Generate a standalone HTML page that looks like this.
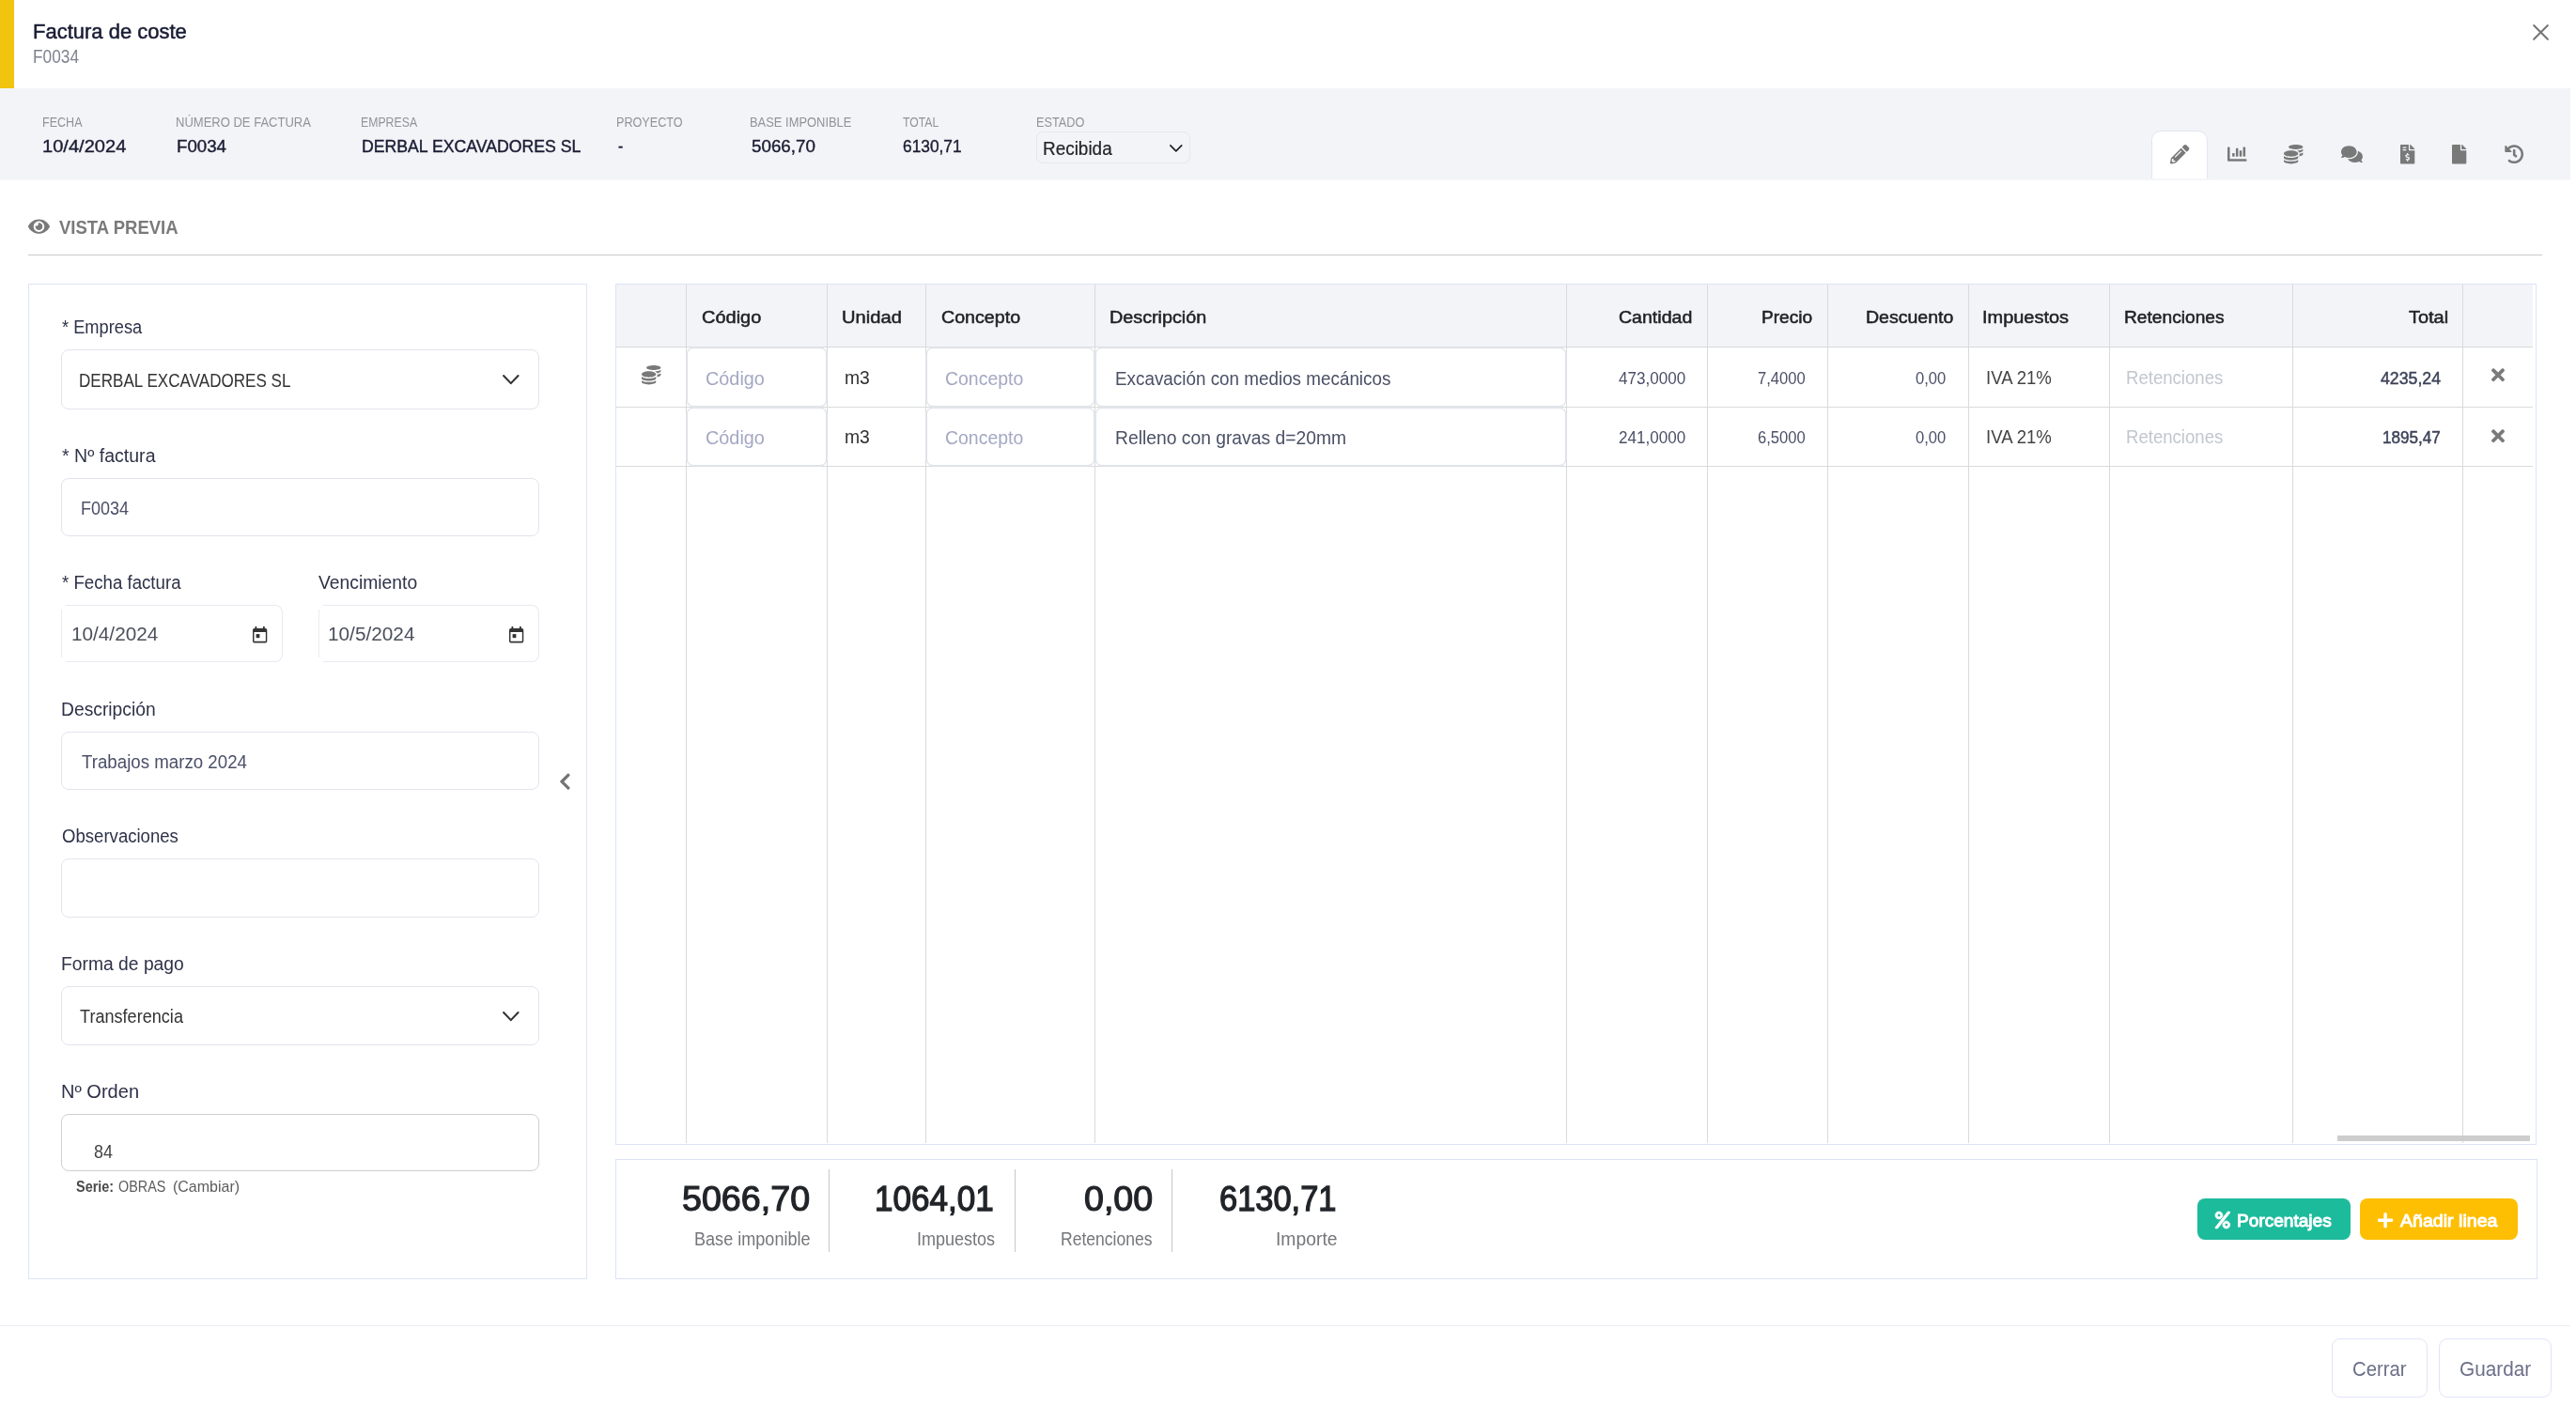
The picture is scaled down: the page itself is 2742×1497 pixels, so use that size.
<!DOCTYPE html>
<html lang="es"><head><meta charset="utf-8"><title>Factura de coste F0034</title>
<style>
html,body{margin:0;padding:0;background:#fff;}
body{width:2742px;height:1497px;position:relative;overflow:hidden;font-family:"Liberation Sans", sans-serif;}
.bx,.ic,.tx{position:absolute;box-sizing:border-box;}
.tx{white-space:nowrap;line-height:1;margin:0;padding:0;font-kerning:normal;transform-origin:0 0;}
.ic{display:block;overflow:visible;}
section,header,footer,main,aside,nav{display:block;position:absolute;left:0;top:0;width:0;height:0;}
#app{position:absolute;left:0;top:0;width:2742px;height:1497px;will-change:transform;}
</style></head><body><div id="app">
<header>
<div class="bx" style="left:0px;top:0px;width:15px;height:94.3px;background:#f1c40f;"></div>
<div class="tx" style="left:35.05px;top:23.00px;font-size:21.9px;font-weight:400;color:#181c33;transform:scaleX(1.0045);-webkit-text-stroke:0.498px #181c33;">Factura de coste</div>
<div class="tx" style="left:34.93px;top:51.00px;font-size:19.9px;font-weight:400;color:#80838f;transform:scaleX(0.8692);">F0034</div>
<svg class="ic" width="17" height="16.8" viewBox="0 0 17 16.8" style="left:2695.9px;top:25.9px;stroke:#767676;stroke-width:2.05;stroke-linecap:round;fill:none;"><path d="M1.1 1.1 L15.9 15.7 M15.9 1.1 L1.1 15.7"/></svg>
</header>
<section id="band">
<div class="bx" style="left:0px;top:94.3px;width:2736px;height:95.3px;background:#f3f4f8;"></div>
<div class="bx" style="left:0px;top:189.6px;width:2736px;height:2.4px;background:#f5f6f9;"></div>
<div class="bx" style="left:1103.4px;top:140.2px;width:164.1px;height:33.6px;border:1px solid #e3e7ee;border-radius:7px;"></div>
<svg class="ic" width="13.6" height="7.7" viewBox="0 0 13.6 7.7" style="left:1244.7px;top:153.9px;fill:none;stroke:#222;stroke-width:1.7;stroke-linecap:round;stroke-linejoin:round"><path d="M0.85 0.85 L6.8 6.85 L12.75 0.85"/></svg>
<div class="tx" style="left:44.69px;top:122.00px;font-size:15.5px;font-weight:400;color:#90939a;transform:scaleX(0.8104);">FECHA</div>
<div class="tx" style="left:187.16px;top:122.00px;font-size:15.5px;font-weight:400;color:#90939a;transform:scaleX(0.8396);">NÚMERO DE FACTURA</div>
<div class="tx" style="left:384.41px;top:122.00px;font-size:15.5px;font-weight:400;color:#90939a;transform:scaleX(0.7925);">EMPRESA</div>
<div class="tx" style="left:655.59px;top:122.00px;font-size:15.5px;font-weight:400;color:#90939a;transform:scaleX(0.8150);">PROYECTO</div>
<div class="tx" style="left:798.47px;top:122.00px;font-size:15.5px;font-weight:400;color:#90939a;transform:scaleX(0.8335);">BASE IMPONIBLE</div>
<div class="tx" style="left:960.50px;top:122.00px;font-size:15.5px;font-weight:400;color:#90939a;transform:scaleX(0.7873);">TOTAL</div>
<div class="tx" style="left:1102.58px;top:122.00px;font-size:15.5px;font-weight:400;color:#90939a;transform:scaleX(0.8192);">ESTADO</div>
<div class="tx" style="left:44.59px;top:147.00px;font-size:18.1px;font-weight:400;color:#1a1d33;transform:scaleX(1.1104);-webkit-text-stroke:0.360px #1a1d33;">10/4/2024</div>
<div class="tx" style="left:187.57px;top:147.00px;font-size:18.1px;font-weight:400;color:#1a1d33;transform:scaleX(1.0310);-webkit-text-stroke:0.388px #1a1d33;">F0034</div>
<div class="tx" style="left:384.52px;top:147.00px;font-size:18.1px;font-weight:400;color:#1a1d33;transform:scaleX(0.9762);-webkit-text-stroke:0.410px #1a1d33;">DERBAL EXCAVADORES SL</div>
<div class="tx" style="left:800.00px;top:147.00px;font-size:18.1px;font-weight:400;color:#1a1d33;transform:scaleX(1.0376);-webkit-text-stroke:0.385px #1a1d33;">5066,70</div>
<div class="tx" style="left:961.20px;top:147.00px;font-size:18.1px;font-weight:400;color:#1a1d33;transform:scaleX(0.9565);-webkit-text-stroke:0.418px #1a1d33;">6130,71</div>
<div class="tx" style="left:657.60px;top:147.00px;font-size:18.1px;font-weight:400;color:#1a1d33;transform:scaleX(0.8667);-webkit-text-stroke:0.462px #1a1d33;">-</div>
<div class="tx" style="left:1109.92px;top:149.00px;font-size:19.4px;font-weight:400;color:#212529;transform:scaleX(0.9763);-webkit-text-stroke:0.205px #212529;">Recibida</div>
<nav>
<div class="bx" style="left:2290.2px;top:139px;width:59.8px;height:50.6px;background:#fff;border:1px solid #e3e5f1;border-bottom:none;border-radius:10px 10px 0 0;"></div>
<svg class="ic" viewBox="0 0 512 512" width="20.40" height="20.4" style="left:2310.10px;top:154.20px;fill:#797979;"><path transform="translate(0,448) scale(1,-1)" d="M497.9 305.9l-46.1006 -46.1006c-4.7002 -4.7002 -12.2998 -4.7002 -17 0l-111 111c-4.7002 4.7002 -4.7002 12.2998 0 17l46.1006 46.1006c18.6992 18.6992 49.0996 18.6992 67.8994 0l60.1006 -60.1006c18.7998 -18.7002 18.7998 -49.0996 0 -67.8994zM284.2 348.2 c4.7002 4.7002 12.2998 4.7002 17.0996 0l111 -111c4.7002 -4.7002 4.7002 -12.2998 0 -17l-262.6 -262.601l-121.5 -21.2998c-16.4004 -2.7998 -30.7002 11.4004 -27.7998 27.7998l21.1992 121.5zM124.1 108.1c5.5 -5.5 14.3008 -5.5 19.8008 0l154 154 c5.5 5.5 5.5 14.3008 0 19.8008s-14.3008 5.5 -19.8008 0l-154 -154c-5.5 -5.5 -5.5 -14.3008 0 -19.8008zM88 24v48h-36.2998l-11.2998 -64.5l31.0996 -31.0996l64.5 11.2998v36.2998h-48z"/></svg>
<svg class="ic" viewBox="0 0 512 512" width="20.40" height="20.4" style="left:2370.80px;top:154.40px;fill:#797979;"><path transform="translate(0,448) scale(1,-1)" d="M332.8 128c-6.39941 0 -12.7998 6.40039 -12.7998 12.7998v134.4c0 6.39941 6.40039 12.7998 12.7998 12.7998h38.4004c6.39941 0 12.7998 -6.40039 12.7998 -12.7998v-134.4c0 -6.39941 -6.40039 -12.7998 -12.7998 -12.7998h-38.4004zM428.8 128 c-6.39941 0 -12.7998 6.40039 -12.7998 12.7998v230.4c0 6.39941 6.40039 12.7998 12.7998 12.7998h38.4004c6.39941 0 12.7998 -6.40039 12.7998 -12.7998v-230.4c0 -6.39941 -6.40039 -12.7998 -12.7998 -12.7998h-38.4004zM140.8 128 c-6.39941 0 -12.7998 6.40039 -12.7998 12.7998v70.4004c0 6.39941 6.40039 12.7998 12.7998 12.7998h38.4004c6.39941 0 12.7998 -6.40039 12.7998 -12.7998v-70.4004c0 -6.39941 -6.40039 -12.7998 -12.7998 -12.7998h-38.4004zM236.8 128 c-6.39941 0 -12.7998 6.40039 -12.7998 12.7998v198.4c0 6.39941 6.40039 12.7998 12.7998 12.7998h38.4004c6.39941 0 12.7998 -6.40039 12.7998 -12.7998v-198.4c0 -6.39941 -6.40039 -12.7998 -12.7998 -12.7998h-38.4004zM496 64c8.83984 0 16 -7.16016 16 -16v-32 c0 -8.83984 -7.16016 -16 -16 -16h-464c-17.6699 0 -32 14.3301 -32 32v336c0 8.83984 7.16016 16 16 16h32c8.83984 0 16 -7.16016 16 -16v-304h432z"/></svg>
<svg class="ic" viewBox="0 0 512 512" width="20.40" height="20.4" style="left:2431.00px;top:154.30px;fill:#797979;"><path transform="translate(0,448) scale(1,-1)" d="M0 42.7002c41.2998 -29.1006 116.8 -42.7002 192 -42.7002s150.7 13.5996 192 42.7002v-42.7002c0 -35.2998 -86 -64 -192 -64s-192 28.7002 -192 64v42.7002zM320 320c-106 0 -192 28.7002 -192 64s86 64 192 64s192 -28.7002 192 -64s-86 -64 -192 -64zM0 147.6 c41.2998 -34 116.9 -51.5996 192 -51.5996s150.7 17.5996 192 51.5996v-51.5996c0 -35.2998 -86 -64 -192 -64s-192 28.7002 -192 64v51.5996zM416 136.6v63.6006c38.7002 6.89941 72.7998 18.0996 96 34.5v-42.7002c0 -23.7002 -38.7002 -44.2998 -96 -55.4004zM192 288 c106 0 192 -35.7998 192 -80s-86 -80 -192 -80s-192 35.7998 -192 80s86 80 192 80zM411.3 231.7c-8.7998 23.7002 -30.5 42.8994 -60 57.2002c64.2002 3.19922 125.2 16.6992 160.7 41.7998v-42.7002c0 -24.2998 -40.7002 -45.5 -100.7 -56.2998z"/></svg>
<svg class="ic" viewBox="0 0 576 512" width="22.95" height="20.4" style="left:2491.70px;top:154.40px;fill:#797979;"><path transform="translate(0,448) scale(1,-1)" d="M416 256c0 -88.4004 -93.0996 -160 -208 -160c-41 0 -79.0996 9.2998 -111.3 25c-21.7998 -12.7002 -52.1006 -25 -88.7002 -25c-3.2002 0 -6 1.7998 -7.2998 4.7998s-0.700195 6.40039 1.5 8.7002c0.299805 0.299805 22.3994 24.2998 35.7998 54.5 c-23.9004 26.0996 -38 57.7002 -38 92c0 88.4004 93.0996 160 208 160s208 -71.5996 208 -160zM538 36c13.4004 -30.2998 35.5 -54.2002 35.7998 -54.5c2.2002 -2.40039 2.7998 -5.7998 1.5 -8.7002c-1.2002 -2.89941 -4.09961 -4.7998 -7.2998 -4.7998 c-36.5996 0 -66.9004 12.2998 -88.7002 25c-32.2002 -15.7998 -70.2998 -25 -111.3 -25c-86.2002 0 -160.2 40.4004 -191.7 97.9004c10.4004 -1.10059 20.9004 -1.90039 31.7002 -1.90039c132.3 0 240 86.0996 240 192c0 6.7998 -0.400391 13.5 -1.2998 20.0996 c75.7998 -23.8994 129.3 -81.1992 129.3 -148.1c0 -34.2998 -14.0996 -66 -38 -92z"/></svg>
<svg class="ic" viewBox="0 0 384 512" width="15.30" height="20.4" style="left:2554.80px;top:154.20px;fill:#797979;"><path transform="translate(0,448) scale(1,-1)" d="M377 343c4.5 -4.5 7 -10.5996 7 -16.9004v-6.09961h-128v128h6.09961c6.40039 0 12.5 -2.5 17 -7zM224 312c0 -13.2002 10.7998 -24 24 -24h136v-328c0 -13.2998 -10.7002 -24 -24 -24h-336c-13.2998 0 -24 10.7002 -24 24v464c0 13.2998 10.7002 24 24 24h200v-136z M64 376v-16c0 -4.41992 3.58008 -8 8 -8h80c4.41992 0 8 3.58008 8 8v16c0 4.41992 -3.58008 8 -8 8h-80c-4.41992 0 -8 -3.58008 -8 -8zM64 296c0 -4.41992 3.58008 -8 8 -8h80c4.41992 0 8 3.58008 8 8v16c0 4.41992 -3.58008 8 -8 8h-80c-4.41992 0 -8 -3.58008 -8 -8 v-16zM208 32.1201c23.6201 0.629883 42.6699 20.54 42.6699 45.0703c0 19.9697 -12.9902 37.8096 -31.5801 43.3896l-45 13.5c-5.16016 1.54004 -8.76953 6.78027 -8.76953 12.7295c0 7.27051 5.2998 13.1904 11.7998 13.1904h28.1104 c4.55957 0 8.94922 -1.29004 12.8193 -3.71973c3.24023 -2.03027 7.36035 -1.91016 10.1299 0.729492l11.75 11.21c3.53027 3.37012 3.33008 9.20996 -0.569336 12.1406c-9.10059 6.83984 -20.0801 10.7695 -31.3701 11.3496v24.29c0 4.41992 -3.58008 8 -8 8h-16 c-4.41992 0 -8 -3.58008 -8 -8v-24.1201c-23.6201 -0.629883 -42.6699 -20.5498 -42.6699 -45.0703c0 -19.9697 12.9893 -37.8096 31.5801 -43.3896l45 -13.5c5.15918 -1.54004 8.76953 -6.78027 8.76953 -12.7295c0 -7.27051 -5.2998 -13.1904 -11.7998 -13.1904h-28.1104 c-4.55957 0 -8.9502 1.2998 -12.8193 3.71973c-3.24023 2.03027 -7.36035 1.91016 -10.1309 -0.729492l-11.75 -11.21c-3.5293 -3.37012 -3.3291 -9.20996 0.570312 -12.1406c9.10059 -6.83008 20.0801 -10.7695 31.3701 -11.3496v-24.29c0 -4.41992 3.58008 -8 8 -8h16 c4.41992 0 8 3.58008 8 8v24.1201z"/></svg>
<svg class="ic" viewBox="0 0 384 512" width="15.30" height="20.4" style="left:2610.40px;top:154.20px;fill:#797979;"><path transform="translate(0,448) scale(1,-1)" d="M224 312c0 -13.2002 10.7998 -24 24 -24h136v-328c0 -13.2998 -10.7002 -24 -24 -24h-336c-13.2998 0 -24 10.7002 -24 24v464c0 13.2998 10.7002 24 24 24h200v-136zM384 326.1v-6.09961h-128v128h6.09961c6.40039 0 12.5 -2.5 17 -7l97.9004 -98 c4.5 -4.5 7 -10.5996 7 -16.9004z"/></svg>
<svg class="ic" viewBox="0 0 512 512" width="20.40" height="20.4" style="left:2665.80px;top:154.30px;fill:#797979;"><path transform="translate(0,448) scale(1,-1)" d="M504 192.469c0.25293 -136.64 -111.18 -248.372 -247.82 -248.468c-59.0146 -0.0419922 -113.223 20.5303 -155.821 54.9111c-11.0771 8.93945 -11.9053 25.541 -1.83984 35.6064l11.2676 11.2676c8.6084 8.6084 22.3525 9.55078 31.8906 1.9834 c31.3848 -24.9043 71.1045 -39.7695 114.323 -39.7695c101.705 0 184 82.3105 184 184c0 101.705 -82.3105 184 -184 184c-48.8145 0 -93.1494 -18.9688 -126.068 -49.9316l50.7539 -50.7539c10.0801 -10.0801 2.94141 -27.3145 -11.3125 -27.3145h-145.373 c-8.83691 0 -16 7.16309 -16 16v145.373c0 14.2539 17.2344 21.3926 27.3145 11.3135l49.3711 -49.3711c44.5234 42.5488 104.866 68.6846 171.314 68.6846c136.81 0 247.747 -110.78 248 -247.531zM323.088 113.685c-8.1377 -10.4629 -23.2158 -12.3467 -33.6787 -4.20996 l-65.4092 50.874v135.651c0 13.2549 10.7451 24 24 24h16c13.2549 0 24 -10.7451 24 -24v-104.349l40.7012 -31.6572c10.4629 -8.13672 12.3477 -23.2158 4.20996 -33.6787z"/></svg>
</nav></section>
<section id="vista">
<svg class="ic" viewBox="0 0 576 512" width="22.95" height="20.4" style="left:29.80px;top:231.25px;fill:#797979;"><path transform="translate(0,448) scale(1,-1)" d="M572.52 206.6c2.21387 -4.37793 3.46094 -9.38965 3.46094 -14.626c0 -5.2373 -1.24707 -10.1855 -3.46094 -14.5635c-54.1992 -105.771 -161.59 -177.41 -284.52 -177.41s-230.29 71.5898 -284.52 177.4c-2.21387 4.37793 -3.46094 9.38965 -3.46094 14.626 c0 5.2373 1.24707 10.1855 3.46094 14.5635c54.1992 105.771 161.59 177.41 284.52 177.41s230.29 -71.5898 284.52 -177.4zM288 48c0.0234375 0 0.0458984 -0.000976562 0.0703125 -0.000976562c79.4365 0 143.93 64.4922 143.93 143.93v0.0712891 c0 79.4756 -64.5244 144 -144 144s-144 -64.5244 -144 -144s64.5244 -144 144 -144zM288 288c0.0761719 0 0.160156 -0.0273438 0.237305 -0.0273438c52.8623 0 95.7803 -42.917 95.7803 -95.7793s-42.918 -95.7803 -95.7803 -95.7803s-95.7803 42.918 -95.7803 95.7803 c0 8.68945 1.16016 17.1104 3.33301 25.1162c7.93164 -5.83594 17.7432 -9.26758 28.3359 -9.26758c26.4092 0 47.8496 21.4404 47.8496 47.8496c0 10.5938 -3.44922 20.3867 -9.28516 28.3184c8.0459 2.34277 16.541 3.66797 25.3096 3.79004z"/></svg>
<div class="tx" style="left:62.70px;top:233.00px;font-size:19.9px;font-weight:700;color:#7a7a7a;transform:scaleX(0.9317);">VISTA PREVIA</div>
<div class="bx" style="left:30px;top:271px;width:2676px;height:1px;background:#c9c9c9;"></div>
</section>
<aside>
<div class="bx" style="left:30px;top:302px;width:595px;height:1060px;border:1px solid #dee4f5;"></div>
<div class="bx" style="left:65px;top:372px;width:509px;height:64px;border:1px solid #e1e4ec;border-radius:8px;background:#fff;"></div>
<svg class="ic" width="17.6" height="10.2" viewBox="0 0 17.6 10.2" style="left:535.4px;top:398.6px;fill:none;stroke:#333;stroke-width:2.1;stroke-linecap:round;stroke-linejoin:round"><path d="M1.05 1.05 L8.8 9.15 L16.55 1.05"/></svg>
<div class="bx" style="left:65px;top:509.2px;width:509px;height:61.8px;border:1px solid #e1e4ec;border-radius:8px;background:#fff;"></div>
<div class="bx" style="left:69.5px;top:644px;width:231.5px;height:61px;border:1px solid #e6e9f1;border-left:none;border-radius:0 8px 8px 0;background:#fff;"></div>
<div class="bx" style="left:65px;top:648.7px;width:1px;height:51.3px;background:#e9ecf3;"></div>
<div class="bx" style="left:343.5px;top:644px;width:230.5px;height:61px;border:1px solid #e6e9f1;border-left:none;border-radius:0 8px 8px 0;background:#fff;"></div>
<div class="bx" style="left:339px;top:648.7px;width:1px;height:51.3px;background:#e9ecf3;"></div>
<svg class="ic" width="15.3" height="17.6" viewBox="0 0 15.3 17.6" style="left:268.6px;top:667.1px;"><path fill="#333" fill-rule="evenodd" d="M2.5 0h1.8v2.1h6.7V0h1.8v2.1h0.7a1.8 1.8 0 0 1 1.8 1.8v11.9a1.8 1.8 0 0 1-1.8 1.8H1.8A1.8 1.8 0 0 1 0 15.8V3.900a1.8 1.8 0 0 1 1.8-1.8h0.7zM1.45 6v9.7h12.4V6z"/><rect x="3.6" y="8.1" width="3.8" height="4.1" fill="#333"/></svg>
<svg class="ic" width="15.3" height="17.6" viewBox="0 0 15.3 17.6" style="left:541.7px;top:667.1px;"><path fill="#333" fill-rule="evenodd" d="M2.5 0h1.8v2.1h6.7V0h1.8v2.1h0.7a1.8 1.8 0 0 1 1.8 1.8v11.9a1.8 1.8 0 0 1-1.8 1.8H1.8A1.8 1.8 0 0 1 0 15.8V3.900a1.8 1.8 0 0 1 1.8-1.8h0.7zM1.45 6v9.7h12.4V6z"/><rect x="3.6" y="8.1" width="3.8" height="4.1" fill="#333"/></svg>
<div class="bx" style="left:65px;top:779.2px;width:509px;height:61.8px;border:1px solid #e1e4ec;border-radius:8px;background:#fff;"></div>
<div class="bx" style="left:65px;top:914px;width:509px;height:63px;border:1px solid #e1e4ec;border-radius:8px;background:#fff;"></div>
<div class="bx" style="left:65px;top:1050.2px;width:509px;height:62.8px;border:1px solid #e1e4ec;border-radius:8px;background:#fff;"></div>
<svg class="ic" width="17.6" height="10.2" viewBox="0 0 17.6 10.2" style="left:535.4px;top:1076.6px;fill:none;stroke:#333;stroke-width:2.1;stroke-linecap:round;stroke-linejoin:round"><path d="M1.05 1.05 L8.8 9.15 L16.55 1.05"/></svg>
<div class="bx" style="left:65px;top:1186px;width:509px;height:61px;border:1px solid #cfcfcf;border-radius:8px;background:#fff;"></div>
<svg class="ic" viewBox="0 0 320 512" width="12.75" height="20.4" style="left:594.87px;top:822.30px;fill:#737373;"><path transform="translate(0,448) scale(1,-1)" d="M34.5195 208.97l194.351 194.34c9.37012 9.37012 24.5703 9.37012 33.9395 0l22.6709 -22.6699c9.35938 -9.35938 9.36914 -24.5195 0.0390625 -33.8994l-154.029 -154.74l154.02 -154.75c9.33984 -9.37988 9.32031 -24.54 -0.0400391 -33.9004l-22.6699 -22.6699 c-9.37012 -9.37012 -24.5693 -9.37012 -33.9395 0l-194.341 194.351c-9.36914 9.37012 -9.36914 24.5693 0 33.9395z"/></svg>
<div class="tx" style="left:65.90px;top:339.00px;font-size:19.6px;font-weight:400;color:#2e3248;transform:scaleX(0.9315);">* Empresa</div>
<div class="tx" style="left:65.90px;top:476.00px;font-size:19.6px;font-weight:400;color:#2e3248;transform:scaleX(0.9978);">* Nº factura</div>
<div class="tx" style="left:65.90px;top:611.00px;font-size:19.6px;font-weight:400;color:#2e3248;transform:scaleX(0.9521);">* Fecha factura</div>
<div class="tx" style="left:339.40px;top:611.00px;font-size:19.6px;font-weight:400;color:#2e3248;transform:scaleX(0.9855);">Vencimiento</div>
<div class="tx" style="left:64.92px;top:746.00px;font-size:19.6px;font-weight:400;color:#2e3248;transform:scaleX(0.9834);">Descripción</div>
<div class="tx" style="left:65.90px;top:881.00px;font-size:19.6px;font-weight:400;color:#2e3248;transform:scaleX(0.9481);">Observaciones</div>
<div class="tx" style="left:64.92px;top:1017.00px;font-size:19.6px;font-weight:400;color:#2e3248;transform:scaleX(0.9842);">Forma de pago</div>
<div class="tx" style="left:64.88px;top:1153.00px;font-size:19.6px;font-weight:400;color:#2e3248;transform:scaleX(1.0226);">Nº Orden</div>
<div class="tx" style="left:84.34px;top:396.00px;font-size:19.9px;font-weight:400;color:#333;transform:scaleX(0.8583);">DERBAL EXCAVADORES SL</div>
<div class="tx" style="left:85.59px;top:532.00px;font-size:19.9px;font-weight:400;color:#4b5068;transform:scaleX(0.9054);">F0034</div>
<div class="tx" style="left:75.66px;top:665.00px;font-size:20px;font-weight:400;color:#4b505c;transform:scaleX(1.0370);">10/4/2024</div>
<div class="tx" style="left:348.76px;top:665.00px;font-size:20px;font-weight:400;color:#4b505c;transform:scaleX(1.0393);">10/5/2024</div>
<div class="tx" style="left:86.50px;top:802.00px;font-size:19.9px;font-weight:400;color:#4b5068;transform:scaleX(0.9399);">Trabajos marzo 2024</div>
<div class="tx" style="left:85.00px;top:1073.00px;font-size:19.9px;font-weight:400;color:#333;transform:scaleX(0.9096);">Transferencia</div>
<div class="tx" style="left:99.90px;top:1217.00px;font-size:19.4px;font-weight:400;color:#444;transform:scaleX(0.9227);">84</div>
<div class="tx" style="left:80.90px;top:1255.00px;font-size:17px;font-weight:700;color:#4a4a4a;transform:scaleX(0.8500);">Serie:</div>
<div class="tx" style="left:126.20px;top:1255.00px;font-size:17px;font-weight:400;color:#5c5c5c;transform:scaleX(0.8449);">OBRAS</div>
<div class="tx" style="left:184.06px;top:1255.00px;font-size:17px;font-weight:400;color:#5c5c5c;transform:scaleX(0.9404);">(Cambiar)</div>
</aside>
<main>
<div class="bx" style="left:655px;top:302px;width:2045px;height:917px;border:1px solid #dbe3f4;"></div>
<div class="bx" style="left:656px;top:303px;width:2040px;height:66px;background:#f3f4f8;"></div>
<div class="bx" style="left:656px;top:369px;width:2040px;height:1px;background:#d9dadb;"></div>
<div class="bx" style="left:656px;top:433px;width:2040px;height:1px;background:#d9dadb;"></div>
<div class="bx" style="left:656px;top:496px;width:2040px;height:1px;background:#d9dadb;"></div>
<div class="bx" style="left:730px;top:303px;width:1px;height:914px;background:#d9dadb;"></div>
<div class="bx" style="left:880px;top:303px;width:1px;height:914px;background:#d9dadb;"></div>
<div class="bx" style="left:985px;top:303px;width:1px;height:914px;background:#d9dadb;"></div>
<div class="bx" style="left:1165px;top:303px;width:1px;height:914px;background:#d9dadb;"></div>
<div class="bx" style="left:1667px;top:303px;width:1px;height:914px;background:#d9dadb;"></div>
<div class="bx" style="left:1817px;top:303px;width:1px;height:914px;background:#d9dadb;"></div>
<div class="bx" style="left:1945px;top:303px;width:1px;height:914px;background:#d9dadb;"></div>
<div class="bx" style="left:2095px;top:303px;width:1px;height:914px;background:#d9dadb;"></div>
<div class="bx" style="left:2245px;top:303px;width:1px;height:914px;background:#d9dadb;"></div>
<div class="bx" style="left:2440px;top:303px;width:1px;height:914px;background:#d9dadb;"></div>
<div class="bx" style="left:2621px;top:303px;width:1px;height:914px;background:#d9dadb;"></div>
<div class="bx" style="left:731.3px;top:370.2px;width:148.4px;height:63px;border:1px solid #dde1e8;border-radius:7px;background:#fff;box-shadow:0 0 0 0.6px #e9ecf0;"></div>
<div class="bx" style="left:986.2px;top:370.2px;width:178.5px;height:63px;border:1px solid #dde1e8;border-radius:7px;background:#fff;box-shadow:0 0 0 0.6px #e9ecf0;"></div>
<div class="bx" style="left:1166.3px;top:370.2px;width:500.4px;height:63px;border:1px solid #dde1e8;border-radius:7px;background:#fff;box-shadow:0 0 0 0.6px #e9ecf0;"></div>
<div class="bx" style="left:731.3px;top:434px;width:148.4px;height:62.2px;border:1px solid #dde1e8;border-radius:7px;background:#fff;box-shadow:0 0 0 0.6px #e9ecf0;"></div>
<div class="bx" style="left:986.2px;top:434px;width:178.5px;height:62.2px;border:1px solid #dde1e8;border-radius:7px;background:#fff;box-shadow:0 0 0 0.6px #e9ecf0;"></div>
<div class="bx" style="left:1166.3px;top:434px;width:500.4px;height:62.2px;border:1px solid #dde1e8;border-radius:7px;background:#fff;box-shadow:0 0 0 0.6px #e9ecf0;"></div>
<svg class="ic" viewBox="0 0 512 512" width="20.40" height="20.4" style="left:682.80px;top:389.30px;fill:#797979;"><path transform="translate(0,448) scale(1,-1)" d="M0 42.7002c41.2998 -29.1006 116.8 -42.7002 192 -42.7002s150.7 13.5996 192 42.7002v-42.7002c0 -35.2998 -86 -64 -192 -64s-192 28.7002 -192 64v42.7002zM320 320c-106 0 -192 28.7002 -192 64s86 64 192 64s192 -28.7002 192 -64s-86 -64 -192 -64zM0 147.6 c41.2998 -34 116.9 -51.5996 192 -51.5996s150.7 17.5996 192 51.5996v-51.5996c0 -35.2998 -86 -64 -192 -64s-192 28.7002 -192 64v51.5996zM416 136.6v63.6006c38.7002 6.89941 72.7998 18.0996 96 34.5v-42.7002c0 -23.7002 -38.7002 -44.2998 -96 -55.4004zM192 288 c106 0 192 -35.7998 192 -80s-86 -80 -192 -80s-192 35.7998 -192 80s86 80 192 80zM411.3 231.7c-8.7998 23.7002 -30.5 42.8994 -60 57.2002c64.2002 3.19922 125.2 16.6992 160.7 41.7998v-42.7002c0 -24.2998 -40.7002 -45.5 -100.7 -56.2998z"/></svg>
<svg class="ic" viewBox="0 0 352 512" width="14.02" height="20.4" style="left:2651.85px;top:389.45px;fill:#7a7a7a;"><path transform="translate(0,448) scale(1,-1)" d="M242.72 192l100.07 -100.07c12.2803 -12.29 12.2803 -32.1992 0 -44.4795l-22.2402 -22.2402c-12.2803 -12.2803 -32.2002 -12.2803 -44.4795 0l-100.07 100.07l-100.07 -100.07c-12.2793 -12.2803 -32.1992 -12.2803 -44.4795 0l-22.2402 22.2402 c-12.2803 12.29 -12.2803 32.2002 0 44.4795l100.07 100.07l-100.07 100.07c-12.2803 12.29 -12.2803 32.1992 0 44.4795l22.2402 22.2402c12.29 12.2803 32.2002 12.2803 44.4795 0l100.07 -100.07l100.07 100.07c12.29 12.2803 32.1992 12.2803 44.4795 0 l22.2402 -22.2402c12.2803 -12.29 12.2803 -32.2002 0 -44.4795z"/></svg>
<svg class="ic" viewBox="0 0 352 512" width="14.02" height="20.4" style="left:2651.85px;top:453.70px;fill:#7a7a7a;"><path transform="translate(0,448) scale(1,-1)" d="M242.72 192l100.07 -100.07c12.2803 -12.29 12.2803 -32.1992 0 -44.4795l-22.2402 -22.2402c-12.2803 -12.2803 -32.2002 -12.2803 -44.4795 0l-100.07 100.07l-100.07 -100.07c-12.2793 -12.2803 -32.1992 -12.2803 -44.4795 0l-22.2402 22.2402 c-12.2803 12.29 -12.2803 32.2002 0 44.4795l100.07 100.07l-100.07 100.07c-12.2803 12.29 -12.2803 32.1992 0 44.4795l22.2402 22.2402c12.29 12.2803 32.2002 12.2803 44.4795 0l100.07 -100.07l100.07 100.07c12.29 12.2803 32.1992 12.2803 44.4795 0 l22.2402 -22.2402c12.2803 -12.29 12.2803 -32.2002 0 -44.4795z"/></svg>
<div class="bx" style="left:2488px;top:1209px;width:205px;height:6px;background:#cdcdcd;"></div>
<div class="tx" style="left:746.77px;top:328.00px;font-size:19.1px;font-weight:400;color:#1f2125;transform:scaleX(1.0461);-webkit-text-stroke:0.526px #1f2125;">Código</div>
<div class="tx" style="left:895.82px;top:328.00px;font-size:19.1px;font-weight:400;color:#1f2125;transform:scaleX(1.0554);-webkit-text-stroke:0.521px #1f2125;">Unidad</div>
<div class="tx" style="left:1001.77px;top:328.00px;font-size:19.1px;font-weight:400;color:#1f2125;transform:scaleX(1.0288);-webkit-text-stroke:0.535px #1f2125;">Concepto</div>
<div class="tx" style="left:1180.84px;top:328.00px;font-size:19.1px;font-weight:400;color:#1f2125;transform:scaleX(1.0349);-webkit-text-stroke:0.531px #1f2125;">Descripción</div>
<div class="tx" style="left:1723.28px;top:328.00px;font-size:19.1px;font-weight:400;color:#1f2125;transform:scaleX(1.0242);-webkit-text-stroke:0.537px #1f2125;">Cantidad</div>
<div class="tx" style="left:1875.27px;top:328.00px;font-size:19.1px;font-weight:400;color:#1f2125;transform:scaleX(1.0009);-webkit-text-stroke:0.549px #1f2125;">Precio</div>
<div class="tx" style="left:1986.05px;top:328.00px;font-size:19.1px;font-weight:400;color:#1f2125;transform:scaleX(1.0222);-webkit-text-stroke:0.538px #1f2125;">Descuento</div>
<div class="tx" style="left:2110.23px;top:328.00px;font-size:19.1px;font-weight:400;color:#1f2125;transform:scaleX(1.0452);-webkit-text-stroke:0.526px #1f2125;">Impuestos</div>
<div class="tx" style="left:2260.67px;top:328.00px;font-size:19.1px;font-weight:400;color:#1f2125;transform:scaleX(1.0043);-webkit-text-stroke:0.548px #1f2125;">Retenciones</div>
<div class="tx" style="left:2563.88px;top:328.00px;font-size:19.1px;font-weight:400;color:#1f2125;transform:scaleX(1.0450);-webkit-text-stroke:0.526px #1f2125;">Total</div>
<div class="tx" style="left:750.90px;top:394.00px;font-size:19.9px;font-weight:400;color:#a3a8c3;transform:scaleX(0.9973);">Código</div>
<div class="tx" style="left:898.80px;top:393.00px;font-size:19.4px;font-weight:400;color:#333;transform:scaleX(0.9979);">m3</div>
<div class="tx" style="left:1006.02px;top:394.00px;font-size:19.9px;font-weight:400;color:#a3a8c3;transform:scaleX(0.9776);">Concepto</div>
<div class="tx" style="left:1186.75px;top:394.00px;font-size:19.9px;font-weight:400;color:#4a5166;transform:scaleX(0.9478);">Excavación con medios mecánicos</div>
<div class="tx" style="left:1723.20px;top:394.00px;font-size:18.6px;font-weight:400;color:#4b5068;transform:scaleX(0.9170);">473,0000</div>
<div class="tx" style="left:1870.80px;top:394.00px;font-size:18.6px;font-weight:400;color:#4b5068;transform:scaleX(0.8916);">7,4000</div>
<div class="tx" style="left:2039.30px;top:394.00px;font-size:18.6px;font-weight:400;color:#4b5068;transform:scaleX(0.8927);">0,00</div>
<div class="tx" style="left:2113.76px;top:393.00px;font-size:19.7px;font-weight:400;color:#444;transform:scaleX(0.9438);">IVA 21%</div>
<div class="tx" style="left:2263.36px;top:393.00px;font-size:19.7px;font-weight:400;color:#c1c7cd;transform:scaleX(0.9438);">Retenciones</div>
<div class="tx" style="left:2533.62px;top:394.00px;font-size:18.2px;font-weight:400;color:#3d4358;transform:scaleX(0.9744);-webkit-text-stroke:0.462px #3d4358;">4235,24</div>
<div class="tx" style="left:750.90px;top:457.00px;font-size:19.9px;font-weight:400;color:#a3a8c3;transform:scaleX(0.9973);">Código</div>
<div class="tx" style="left:898.80px;top:456.00px;font-size:19.4px;font-weight:400;color:#333;transform:scaleX(0.9979);">m3</div>
<div class="tx" style="left:1006.02px;top:457.00px;font-size:19.9px;font-weight:400;color:#a3a8c3;transform:scaleX(0.9776);">Concepto</div>
<div class="tx" style="left:1186.73px;top:457.00px;font-size:19.9px;font-weight:400;color:#4a5166;transform:scaleX(0.9696);">Relleno con gravas d=20mm</div>
<div class="tx" style="left:1723.20px;top:457.00px;font-size:18.6px;font-weight:400;color:#4b5068;transform:scaleX(0.9170);">241,0000</div>
<div class="tx" style="left:1870.80px;top:457.00px;font-size:18.6px;font-weight:400;color:#4b5068;transform:scaleX(0.8916);">6,5000</div>
<div class="tx" style="left:2039.30px;top:457.00px;font-size:18.6px;font-weight:400;color:#4b5068;transform:scaleX(0.8927);">0,00</div>
<div class="tx" style="left:2113.76px;top:456.00px;font-size:19.7px;font-weight:400;color:#444;transform:scaleX(0.9438);">IVA 21%</div>
<div class="tx" style="left:2263.36px;top:456.00px;font-size:19.7px;font-weight:400;color:#c1c7cd;transform:scaleX(0.9438);">Retenciones</div>
<div class="tx" style="left:2535.89px;top:457.00px;font-size:18.2px;font-weight:400;color:#3d4358;transform:scaleX(0.9400);-webkit-text-stroke:0.479px #3d4358;">1895,47</div>
</main>
<section id="totals">
<div class="bx" style="left:655px;top:1234px;width:2046px;height:128px;border:1px solid #dbe3f4;"></div>
<div class="bx" style="left:882px;top:1245px;width:1px;height:87.5px;background:#c4c7cd;"></div>
<div class="bx" style="left:1080px;top:1245px;width:1px;height:87.5px;background:#c4c7cd;"></div>
<div class="bx" style="left:1247px;top:1245px;width:1px;height:87.5px;background:#c4c7cd;"></div>
<div class="bx" style="left:2339px;top:1276px;width:163px;height:44px;background:#1cbb9c;border-radius:8px;"></div>
<div class="bx" style="left:2512px;top:1276px;width:168px;height:44px;background:#febe02;border-radius:8px;"></div>
<svg class="ic" viewBox="0 0 448 512" width="15.75" height="18" style="left:2358.40px;top:1290.20px;fill:#fff;stroke:#fff;stroke-width:22;stroke-linejoin:round;"><path transform="translate(0,448) scale(1,-1)" d="M112 224c-61.9004 0 -112 50.0996 -112 112s50.0996 112 112 112s112 -50.0996 112 -112s-50.0996 -112 -112 -112zM112 384c-26.5 0 -48 -21.5 -48 -48s21.5 -48 48 -48s48 21.5 48 48s-21.5 48 -48 48zM336 160c61.9004 0 112 -50.0996 112 -112 s-50.0996 -112 -112 -112s-112 50.0996 -112 112s50.0996 112 112 112zM336 0c26.5 0 48 21.5 48 48s-21.5 48 -48 48s-48 -21.5 -48 -48s21.5 -48 48 -48zM392.3 447.8l31.6006 0.100586c19.3994 0.0996094 30.8994 -21.8008 19.6992 -37.8008l-366.199 -463.699 c-4.33203 -6.17773 -11.4912 -10.1973 -19.6006 -10.2002l-33.3994 -0.100586c-19.5 0 -30.9004 21.9004 -19.7002 37.8008l368 463.699c4.5 6.40039 11.7998 10.2002 19.5996 10.2002z"/></svg>
<svg class="ic" viewBox="0 0 448 512" width="16.19" height="18.5" style="left:2531.20px;top:1290.05px;fill:#fff;"><path transform="translate(0,448) scale(1,-1)" d="M416 240c17.6699 0 32 -14.3301 32 -32v-32c0 -17.6699 -14.3301 -32 -32 -32h-144v-144c0 -17.6699 -14.3301 -32 -32 -32h-32c-17.6699 0 -32 14.3301 -32 32v144h-144c-17.6699 0 -32 14.3301 -32 32v32c0 17.6699 14.3301 32 32 32h144v144 c0 17.6699 14.3301 32 32 32h32c17.6699 0 32 -14.3301 32 -32v-144h144z"/></svg>
<div class="tx" style="left:725.70px;top:1258.00px;font-size:37.5px;font-weight:400;color:#212529;transform:scaleX(1.0038);-webkit-text-stroke:1.196px #212529;">5066,70</div>
<div class="tx" style="left:931.43px;top:1258.00px;font-size:37.5px;font-weight:400;color:#212529;transform:scaleX(0.9352);-webkit-text-stroke:1.283px #212529;">1064,01</div>
<div class="tx" style="left:1153.90px;top:1258.00px;font-size:37.5px;font-weight:400;color:#212529;transform:scaleX(1.0024);-webkit-text-stroke:1.197px #212529;">0,00</div>
<div class="tx" style="left:1298.08px;top:1258.00px;font-size:37.5px;font-weight:400;color:#212529;transform:scaleX(0.9185);-webkit-text-stroke:1.306px #212529;">6130,71</div>
<div class="tx" style="left:738.68px;top:1310.00px;font-size:19.7px;font-weight:400;color:#74767a;transform:scaleX(0.9180);">Base imponible</div>
<div class="tx" style="left:976.29px;top:1310.00px;font-size:19.7px;font-weight:400;color:#74767a;transform:scaleX(0.9146);">Impuestos</div>
<div class="tx" style="left:1129.11px;top:1310.00px;font-size:19.7px;font-weight:400;color:#74767a;transform:scaleX(0.8913);">Retenciones</div>
<div class="tx" style="left:1358.02px;top:1310.00px;font-size:19.7px;font-weight:400;color:#74767a;transform:scaleX(0.9819);">Importe</div>
<div class="tx" style="left:2381.47px;top:1291.00px;font-size:18.6px;font-weight:400;color:#fff;transform:scaleX(1.0259);-webkit-text-stroke:0.975px #fff;">Porcentajes</div>
<div class="tx" style="left:2555.30px;top:1291.00px;font-size:18.6px;font-weight:400;color:#fff;transform:scaleX(1.0540);-webkit-text-stroke:0.949px #fff;">Añadir linea</div>
</section>
<footer>
<div class="bx" style="left:0px;top:1411px;width:2736px;height:1px;background:#eceef3;"></div>
<div class="bx" style="left:2482px;top:1425px;width:102px;height:63px;border:1px solid #e0e4f7;border-radius:9px;background:#fff;"></div>
<div class="bx" style="left:2596px;top:1425px;width:120px;height:63px;border:1px solid #e0e4f7;border-radius:9px;background:#fff;"></div>
<div class="tx" style="left:2503.66px;top:1447.00px;font-size:21.6px;font-weight:400;color:#6b7089;transform:scaleX(0.9417);">Cerrar</div>
<div class="tx" style="left:2617.94px;top:1447.00px;font-size:21.6px;font-weight:400;color:#6b7089;transform:scaleX(0.9612);">Guardar</div>
</footer>
</div></body></html>
